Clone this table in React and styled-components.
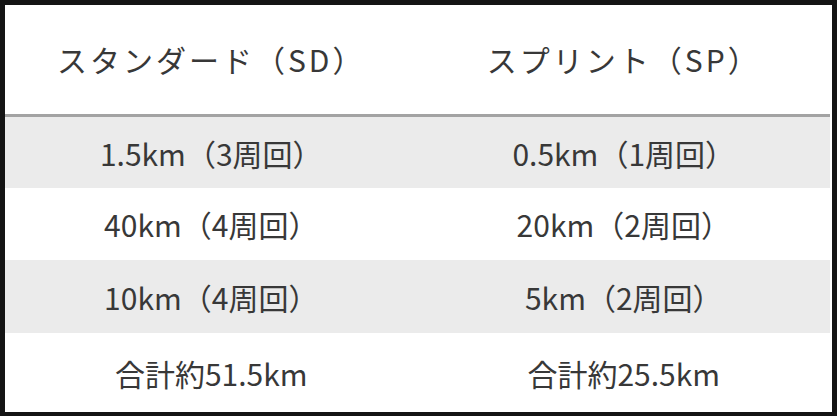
import React from 'react'
import styled, { createGlobalStyle } from 'styled-components'

const GlobalStyle = createGlobalStyle`
  html, body {
    margin: 0;
    padding: 0;
    background: #ffffff;
  }
  body {
    font-family: "Noto Sans CJK JP", "Noto Sans", sans-serif;
    color: #383838;
  }
`

const rows = [
  { sd: '1.5km（3周回）', sp: '0.5km（1周回）', height: 71, shaded: true },
  { sd: '40km（4周回）', sp: '20km（2周回）', height: 72 },
  { sd: '10km（4周回）', sp: '5km（2周回）', height: 73, shaded: true },
  { sd: '合計約51.5km', sp: '合計約25.5km', height: 79 },
]

function App() {
  return (
    <>
      <GlobalStyle />
      <Page>
        <Table>
          <HeaderRow>
            <Cell>スタンダード（SD）</Cell>
            <Cell>スプリント（SP）</Cell>
          </HeaderRow>
          {rows.map((row, i) => (
            <Row key={i} $shaded={row.shaded} $height={row.height}>
              <Cell>{row.sd}</Cell>
              <Cell>{row.sp}</Cell>
            </Row>
          ))}
        </Table>
      </Page>
    </>
  )
}

export default App

const Page = styled.div`
  width: 840px;
  height: 420px;
  background: #ffffff;
`

const Table = styled.div`
  width: 837px;
  box-sizing: border-box;
  border-style: solid;
  border-color: #141414;
  border-width: 5px 5px 4px 5px;
  padding-right: 2px;
  background: #ffffff;
  display: flex;
  flex-direction: column;
`

const Row = styled.div`
  display: grid;
  grid-template-columns: 1fr 1fr;
  box-sizing: border-box;
  height: ${(p) => p.$height}px;
  background: ${(p) => (p.$shaded ? '#ebebeb' : '#ffffff')};
  font-size: 30px;
`

const HeaderRow = styled(Row)`
  height: 112px;
  padding-bottom: 2px;
  background: #ffffff;
  border-bottom: 3px solid #a3a3a3;
  letter-spacing: 3px;
`

const Cell = styled.div`
  display: flex;
  align-items: center;
  justify-content: center;
  white-space: nowrap;
`
